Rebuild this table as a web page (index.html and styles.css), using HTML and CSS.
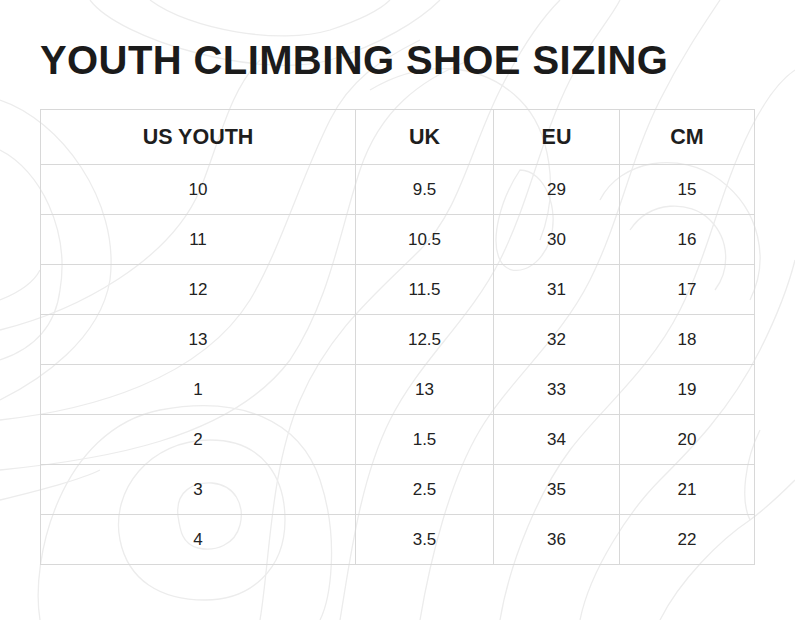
FILE: index.html
```html
<!DOCTYPE html>
<html lang="en">
<head>
<meta charset="utf-8">
<title>Youth Climbing Shoe Sizing</title>
<link rel="stylesheet" href="styles.css">
</head>
<body>
<svg class="topo" viewBox="0 0 795 620" preserveAspectRatio="none" aria-hidden="true">
  <g fill="none" stroke="#ececec" stroke-width="1.3">
    <path d="M90 0 C120 40 260 80 330 60 C380 45 420 20 440 0"/>
    <path d="M150 0 C190 30 280 45 330 30 C360 20 380 10 390 0"/>
    <path d="M0 100 C60 120 120 200 110 280 C100 340 40 380 0 400"/>
    <path d="M0 150 C40 170 70 230 60 290 C55 330 30 350 0 360"/>
    <path d="M0 330 C80 310 170 260 200 190 C220 140 230 90 260 60"/>
    <path d="M0 420 C90 410 200 380 250 300 C280 250 300 180 330 120 C350 80 380 60 420 40"/>
    <path d="M0 470 C100 460 230 440 290 360 C330 300 340 230 360 170 C380 110 420 80 470 60"/>
    <path d="M178 516 C175 490 195 482 212 483 C235 485 245 505 240 525 C235 545 215 552 198 548 C182 544 180 530 178 516 Z"/>
    <path d="M120 540 C110 490 150 440 210 440 C265 440 285 480 285 520 C285 570 250 600 205 600 C160 600 128 580 120 540 Z"/>
    <path d="M40 620 C30 560 60 430 160 410 C240 395 300 420 320 480 C340 540 330 600 320 620"/>
    <path d="M260 620 C270 560 270 470 300 400 C330 330 380 290 420 250 C460 210 470 150 500 90 C520 50 540 20 560 0"/>
    <path d="M340 620 C350 560 360 480 390 420 C420 360 470 320 500 260 C530 200 540 140 570 80 C590 40 610 20 620 0"/>
    <path d="M420 620 C430 560 450 480 480 430 C510 380 560 340 590 280 C620 220 630 160 660 100 C680 60 700 30 720 0"/>
    <path d="M500 620 C510 560 540 490 570 450 C600 410 650 370 680 310 C710 250 720 190 750 130 C765 100 780 80 795 70"/>
    <path d="M580 620 C590 570 630 510 660 480 C690 450 730 410 760 350 C780 310 790 280 795 260"/>
    <path d="M660 620 C680 580 720 540 750 520 C770 505 785 490 795 480"/>
    <path d="M520 170 C500 200 490 240 500 260 C510 280 540 270 550 240 C560 210 545 170 520 170 Z"/>
    <path d="M370 90 C420 60 480 60 520 100 C550 130 560 190 540 240"/>
    <path d="M600 200 C620 160 680 150 720 180 C760 210 770 260 750 300"/>
    <path d="M630 230 C650 200 690 200 710 220 C730 240 730 270 715 290"/>
    <path d="M760 430 C745 460 740 500 750 520"/>
    <path d="M0 500 C40 490 80 480 100 470"/>
    <path d="M0 300 C25 290 35 280 40 270"/>
  </g>
</svg>
<main class="page">
  <h1 class="title">YOUTH CLIMBING SHOE SIZING</h1>
  <table class="size-table">
    <colgroup>
      <col class="c-us">
      <col class="c-uk">
      <col class="c-eu">
      <col class="c-cm">
    </colgroup>
    <thead>
      <tr><th>US YOUTH</th><th>UK</th><th>EU</th><th>CM</th></tr>
    </thead>
    <tbody>
      <tr><td>10</td><td>9.5</td><td>29</td><td>15</td></tr>
      <tr><td>11</td><td>10.5</td><td>30</td><td>16</td></tr>
      <tr><td>12</td><td>11.5</td><td>31</td><td>17</td></tr>
      <tr><td>13</td><td>12.5</td><td>32</td><td>18</td></tr>
      <tr><td>1</td><td>13</td><td>33</td><td>19</td></tr>
      <tr><td>2</td><td>1.5</td><td>34</td><td>20</td></tr>
      <tr><td>3</td><td>2.5</td><td>35</td><td>21</td></tr>
      <tr><td>4</td><td>3.5</td><td>36</td><td>22</td></tr>
    </tbody>
  </table>
</main>
</body>
</html>
```
FILE: styles.css
```css
html, body {
  margin: 0;
  padding: 0;
  background: #ffffff;
}

body {
  font-family: "Liberation Sans", Arial, sans-serif;
  color: #222222;
  width: 795px;
  height: 620px;
  overflow: hidden;
  position: relative;
}

.topo {
  position: absolute;
  left: 0;
  top: 0;
  width: 795px;
  height: 620px;
  z-index: 0;
}

.page {
  position: relative;
  z-index: 1;
  padding: 37px 41px 0 40px;
}

.title {
  margin: 0 0 26px 0;
  font-size: 40px;
  line-height: 46px;
  font-weight: 700;
  color: #1b1b1b;
  letter-spacing: 0.4px;
}

.size-table {
  width: 714px;
  table-layout: fixed;
  border-collapse: collapse;
}

.c-us { width: 315px; }
.c-uk { width: 138px; }
.c-eu { width: 126px; }
.c-cm { width: 135px; }

.size-table th,
.size-table td {
  border: 1px solid #d8d8d8;
  text-align: center;
  padding: 0;
}

.size-table th {
  height: 54px;
  font-size: 21.5px;
  font-weight: 700;
  color: #1e1e1e;
}

.size-table td {
  height: 49px;
  font-size: 17px;
  color: #222222;
}
```
